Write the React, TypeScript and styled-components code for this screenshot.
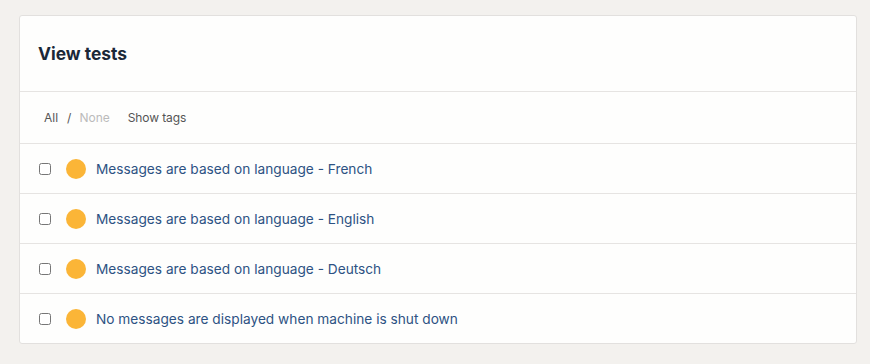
import React from "react";
import styled, { createGlobalStyle } from "styled-components";

const GlobalStyle = createGlobalStyle`
  body {
    margin: 0;
    background: #f3f1ee;
    font-family: Inter, "Noto Sans", sans-serif;
  }
`;

const Page = styled.div`
  padding: 15px 13px 20px 19px;
`;

const Card = styled.div`
  background: #fefefd;
  border: 1px solid #e2e0de;
  border-radius: 3px;
`;

const Header = styled.div`
  height: 75px;
  padding: 0 18px;
  display: flex;
  align-items: center;
  border-bottom: 1px solid #e6e4e2;
`;

const Title = styled.h2`
  margin: 0;
  font-size: 17.4px;
  font-weight: 700;
  color: #1b2838;
`;

const Toolbar = styled.div`
  height: 51px;
  padding: 0 24px;
  display: flex;
  align-items: center;
  font-size: 12px;
  color: #555;
  border-bottom: 1px solid #e6e4e2;
`;

const ToolLink = styled.span<{ $muted?: boolean }>`
  color: ${(p) => (p.$muted ? "#bbb" : "#555")};
  cursor: pointer;
`;

const Slash = styled.span`
  margin: 0 8px 0 9px;
  color: #555;
`;

const ShowTags = styled(ToolLink)`
  margin-left: 18px;
  letter-spacing: -0.1px;
`;

const Row = styled.div`
  height: 49px;
  padding: 0 19px;
  display: flex;
  align-items: center;
  & + & {
    border-top: 1px solid #e6e4e2;
  }
`;

const Check = styled.input`
  width: 12px;
  height: 12px;
  margin: 0 15px 0 0;
`;

const Status = styled.span`
  width: 20px;
  height: 20px;
  border-radius: 50%;
  background: #fbb537;
  flex-shrink: 0;
  margin-right: 10px;
`;

const Name = styled.a`
  font-size: 13.7px;
  color: #2d5283;
  text-decoration: none;
`;

const tests = [
  "Messages are based on language - French",
  "Messages are based on language - English",
  "Messages are based on language - Deutsch",
  "No messages are displayed when machine is shut down",
];

export default function App() {
  return (
    <>
      <GlobalStyle />
      <Page>
        <Card>
          <Header>
            <Title>View tests</Title>
          </Header>
          <Toolbar>
            <ToolLink>All</ToolLink>
            <Slash>/</Slash>
            <ToolLink $muted>None</ToolLink>
            <ShowTags>Show tags</ShowTags>
          </Toolbar>
          {tests.map((t) => (
            <Row key={t}>
              <Check type="checkbox" />
              <Status />
              <Name href="#">{t}</Name>
            </Row>
          ))}
        </Card>
      </Page>
    </>
  );
}
